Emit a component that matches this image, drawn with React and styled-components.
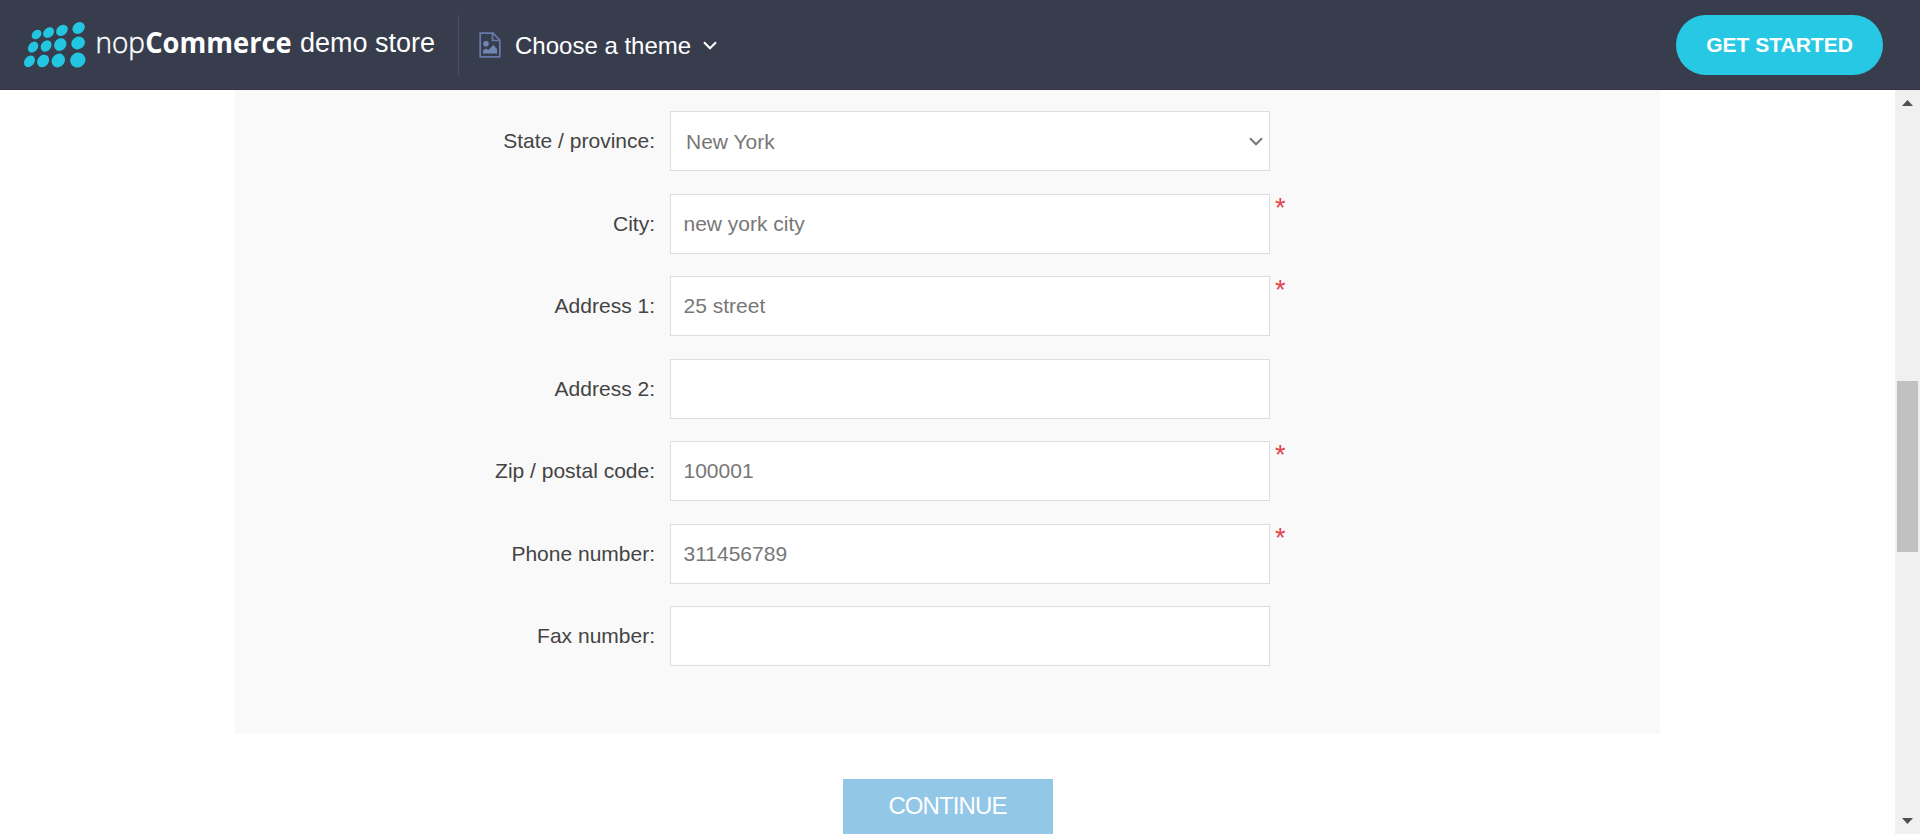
import React from "react";
import styled, { createGlobalStyle } from "styled-components";

const Global = createGlobalStyle`
  *, *::before, *::after { box-sizing: border-box; }
  body { margin: 0; background: #fff; font-family: "Liberation Sans", Arial, sans-serif; overflow: hidden; }
`;

const Page = styled.div`
  display: flex;
  flex-direction: column;
  height: 834px;
  overflow: hidden;
`;

const Header = styled.header`
  display: flex;
  align-items: center;
  flex: none;
  height: 90px;
  padding: 0 37px 0 24px;
  background: #373d4d;
  box-shadow: inset 0 -1px #363248;
  color: #fff;
`;

const Logo = styled.div`
  display: flex;
  align-items: center;
  width: 435px;
  height: 60px;
  border-right: 1px solid #4b5161;
  white-space: nowrap;
`;

const WordMark = styled.svg`
  flex: none;
  display: block;
  width: 269px;
  height: 60px;
  overflow: visible;
`;

const StoreName = styled.span`
  margin: -4px 0 0 7px;
  font-size: 27px;
  line-height: 32px;
`;

const ThemePicker = styled.div`
  display: flex;
  align-items: center;
  margin-left: 20px;
  font-size: 24px;
  line-height: 28px;
  white-space: nowrap;
`;

const ThemeLabel = styled.span`
  margin: 1px 12px 0 14px;
`;

const Icon = styled.svg`
  display: block;
  flex: none;
`;

const GetStarted = styled.button`
  width: 207px;
  height: 60px;
  margin-left: auto;
  padding: 0;
  border: 0;
  border-radius: 30px;
  background: #27c8e3;
  color: #fff;
  font: bold 21px/60px "Liberation Sans", Arial, sans-serif;
`;

const Body = styled.div`
  display: flex;
  flex: 1;
  min-height: 0;
`;

const Content = styled.main`
  display: flex;
  flex-direction: column;
  align-items: center;
  flex: 1;
`;

const Panel = styled.section`
  display: flex;
  flex-direction: column;
  gap: 22.5px;
  flex: none;
  width: 1425px;
  height: 644px;
  padding-top: 21px;
  background: #f9f9f9;
`;

const Row = styled.div`
  display: flex;
  height: 60px;
`;

const Label = styled.label`
  width: 420px;
  margin-right: 15px;
  color: #444;
  font-size: 21px;
  line-height: 59px;
  text-align: right;
`;

const Field = styled.div`
  display: flex;
  align-items: center;
  justify-content: space-between;
  width: 600px;
  height: 60px;
  padding: 0 6px 0 ${(p) => (p.$select ? 15 : 12.5)}px;
  border: 1px solid #ddd;
  background: #fff;
  color: #777;
  font-size: 21px;
  line-height: 58px;
`;

const Value = styled.span`
  padding-top: ${(p) => (p.$select ? 2 : 0)}px;
`;

const Required = styled.span`
  margin: -1px 0 0 5px;
  color: #e4434b;
  font-size: 27px;
  line-height: 30px;
`;

const Continue = styled.button`
  flex: none;
  width: 210px;
  height: 72px;
  margin-top: 45px;
  padding: 0 0 19px;
  border: 0;
  background: #92c7e8;
  color: #fff;
  font: 24px/53px "Liberation Sans", Arial, sans-serif;
  letter-spacing: -0.9px;
`;

const Scrollbar = styled.div`
  display: flex;
  flex-direction: column;
  align-items: center;
  width: 25px;
  padding: 10px 0;
  background: #f0f0f0;
`;

const Thumb = styled.div`
  width: 21px;
  height: 171px;
  margin: 275px 0 auto;
  background: #c1c1c1;
`;

const dots = [
  [36.6, 34.5, 4.2, 5.4], [48.6, 32.6, 4.7, 6], [62, 30.3, 5, 6.4], [78.6, 28, 5.4, 6.7],
  [33.1, 47.1, 4.6, 6], [46.1, 46, 4.9, 6.1], [60.3, 44.6, 5.8, 6.7], [78.1, 43, 6.1, 7.1],
  [29.5, 61.3, 4.9, 6.3], [43.1, 61, 5.6, 6.7], [58.3, 60.5, 6.4, 7.2], [77.8, 60.1, 7.4, 7.8],
];

const rows = [
  { label: "State / province:", value: "New York", select: true },
  { label: "City:", value: "new york city", required: true },
  { label: "Address 1:", value: "25 street", required: true },
  { label: "Address 2:", value: "" },
  { label: "Zip / postal code:", value: "100001", required: true },
  { label: "Phone number:", value: "311456789", required: true },
  { label: "Fax number:", value: "" },
];

const Chevron = ({ width, height, color, strokeWidth }) => (
  <Icon width={width} height={height} viewBox="0 0 14 9" fill="none" stroke={color} strokeWidth={strokeWidth}>
    <path d="M1 1.3 7 7.3 13 1.3" />
  </Icon>
);

export default function App() {
  return (
    <Page>
      <Global />
      <Header>
        <Logo>
          <WordMark viewBox="24 15 269 60">
            {dots.map(([x, y, rx, ry], i) => (
              <ellipse key={`${x}-${y}`} cx={x} cy={y} rx={rx} ry={ry} fill="#22c6e1" transform={`rotate(${i < 4 ? 50 : i % 4 === 3 ? 60 : 40} ${x} ${y})`} />
            ))}
            <text x="95.5" y="53" fill="#fff" stroke="#fff" strokeWidth="0.5" fontFamily="'Open Sans', sans-serif" fontSize="29" fontWeight="300" textLength="49.5" lengthAdjust="spacingAndGlyphs">nop</text>
            <text x="145.2" y="53" fill="#fff" fontFamily="'Open Sans', sans-serif" fontSize="29" fontWeight="700" textLength="146.5" lengthAdjust="spacingAndGlyphs">Commerce</text>
          </WordMark>
          <StoreName>demo store</StoreName>
        </Logo>
        <ThemePicker>
          <Icon width="22" height="26" viewBox="0 0 22 26">
            <path d="M1.2 1.2H14L20.8 8V24.8H1.2ZM13.5 1.2V8.5H20.8" fill="none" stroke="#687aab" strokeWidth="1.7" />
            <circle cx="7" cy="11.7" r="2.8" fill="#7385b3" />
            <path d="M4 21.5V18.5L7 16.5 9.3 18 14.3 13 18 17V21.5Z" fill="#7385b3" />
          </Icon>
          <ThemeLabel>Choose a theme</ThemeLabel>
          <Chevron width={14} height={9} color="#fff" strokeWidth={2.1} />
        </ThemePicker>
        <GetStarted>GET STARTED</GetStarted>
      </Header>
      <Body>
        <Content>
          <Panel>
            {rows.map((r) => (
              <Row key={r.label}>
                <Label>{r.label}</Label>
                <Field $select={r.select}>
                  <Value $select={r.select}>{r.value}</Value>
                  {r.select && <Chevron width={14} height={9} color="#777" strokeWidth={2} />}
                </Field>
                {r.required && <Required>*</Required>}
              </Row>
            ))}
          </Panel>
          <Continue>CONTINUE</Continue>
        </Content>
        <Scrollbar>
          <Icon width="11" height="6" viewBox="0 0 11 6"><path d="M0 6 5.5 0 11 6Z" fill="#505050" /></Icon>
          <Thumb />
          <Icon width="11" height="6" viewBox="0 0 11 6"><path d="M0 0 5.5 6 11 0Z" fill="#505050" /></Icon>
        </Scrollbar>
      </Body>
    </Page>
  );
}
